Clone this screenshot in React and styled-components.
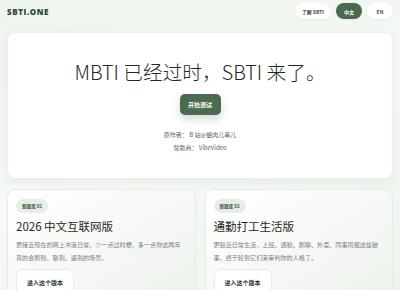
import React from "react";
import styled, { createGlobalStyle } from "styled-components";

const GlobalStyle = createGlobalStyle`
  html, body {
    margin: 0;
    padding: 0;
    background: linear-gradient(160deg, #eef4ee 0%, #f6f9f5 50%, #eef3ee 100%);
    font-family: "Noto Sans CJK SC", "Noto Sans", sans-serif;
    color: #1f2a22;
  }
`;

const Page = styled.div`
  padding: 3px 7px 0;
  overflow: hidden;
  height: 290px;
  box-sizing: border-box;
`;

const TopBar = styled.header`
  display: flex;
  align-items: center;
  justify-content: space-between;
  height: 16px;
`;

const Logo = styled.div`
  font-family: "Open Sans", sans-serif;
  font-weight: 800;
  font-size: 8px;
  letter-spacing: 0.6px;
  color: #2f4a36;
`;

const Nav = styled.nav`
  display: flex;
  gap: 5px;
`;

const NavButton = styled.button`
  height: 16px;
  min-width: 26px;
  padding: 0 7px;
  border: none;
  border-radius: 8px;
  font-family: "Noto Sans CJK SC", sans-serif;
  font-size: 5px;
  font-weight: 700;
  background: ${(p) => (p.$active ? "#4a6a4e" : "#ffffff")};
  color: ${(p) => (p.$active ? "#ffffff" : "#3a4a3e")};
  box-shadow: 0 1px 3px rgba(40, 70, 45, 0.08);
`;

const Hero = styled.section`
  margin-top: 13px;
  background: #ffffff;
  border-radius: 8px;
  height: 147px;
  display: flex;
  flex-direction: column;
  align-items: center;
  box-shadow: 0 3px 10px rgba(60, 90, 65, 0.08);
  border: 1px solid #eef2ee;
  box-sizing: border-box;
`;

const Title = styled.h1`
  margin: 24px 0 0;
  font-size: 19.7px;
  font-weight: 300;
  line-height: 30px;
  color: #1e2b22;
`;

const StartButton = styled.button`
  margin-top: 7px;
  width: 41px;
  height: 21px;
  border: none;
  border-radius: 5px;
  background: #4b6a4f;
  color: #ffffff;
  font-family: "Noto Sans CJK SC", sans-serif;
  font-size: 6px;
  font-weight: 700;
  box-shadow: 0 4px 8px rgba(50, 80, 55, 0.22);
`;

const Credits = styled.div`
  margin-top: 15px;
  display: flex;
  flex-direction: column;
  align-items: center;
  gap: 3px;
  font-size: 6px;
  line-height: 10px;
  color: #5a655d;
`;

const Cards = styled.div`
  margin-top: 10px;
  display: grid;
  grid-template-columns: 1fr 1fr;
  gap: 9px;
`;

const Card = styled.article`
  display: flex;
  flex-direction: column;
  align-items: flex-start;
  background: linear-gradient(150deg, #ffffff 0%, #f6f8f5 55%, #edf2ec 100%);
  border: 1px solid #e4ece4;
  border-radius: 8px;
  padding: 9px 9px 0 8px;
  height: 110px;
  box-sizing: border-box;
`;

const Badge = styled.span`
  display: block;
  height: 14px;
  line-height: 14px;
  padding: 0 6px;
  border-radius: 7px;
  background: #e5eee5;
  color: #3c4f40;
  font-size: 4.6px;
  font-weight: 700;
`;

const CardTitle = styled.h2`
  margin: 3px 0 0;
  font-size: 11.5px;
  font-weight: 400;
  line-height: 20px;
  color: #1e2b22;
`;

const CardText = styled.p`
  margin: 2px 0 0;
  font-size: 6.1px;
  line-height: 13px;
  color: #78827b;
  text-spacing-trim: space-all;
`;

const EnterButton = styled.button`
  margin-top: 5px;
  height: 26px;
  padding: 0 10px;
  border: 1px solid #e6ece6;
  border-radius: 7px;
  background: #ffffff;
  color: #2b3a2f;
  font-family: "Noto Sans CJK SC", sans-serif;
  font-size: 6px;
  font-weight: 700;
`;

const versions = [
  {
    tag: "新题库 01",
    title: "2026 中文互联网版",
    text: "更接近现在的网上冲浪日常，少一点过时梗，多一点你这两年真的会刷到、聊到、遇到的场景。",
  },
  {
    tag: "新题库 02",
    title: "通勤打工生活版",
    text: "更贴近日常生活，上班、通勤、刷聊、外卖、同事周报这些破事，终于轮到它们来审判你的人格了。",
  },
];

export default function App() {
  return (
    <Page>
      <GlobalStyle />
      <TopBar>
        <Logo>SBTI.ONE</Logo>
        <Nav>
          <NavButton>了解 SBTI</NavButton>
          <NavButton $active>中文</NavButton>
          <NavButton>EN</NavButton>
        </Nav>
      </TopBar>
      <Hero>
        <Title>MBTI 已经过时，SBTI 来了。</Title>
        <StartButton>开始测试</StartButton>
        <Credits>
          <span>原作者： B 站@蛆肉儿串儿</span>
          <span>赞助商： VibeVideo</span>
        </Credits>
      </Hero>
      <Cards>
        {versions.map((v) => (
          <Card key={v.tag}>
            <Badge>{v.tag}</Badge>
            <CardTitle>{v.title}</CardTitle>
            <CardText>{v.text}</CardText>
            <EnterButton>进入这个版本</EnterButton>
          </Card>
        ))}
      </Cards>
    </Page>
  );
}
